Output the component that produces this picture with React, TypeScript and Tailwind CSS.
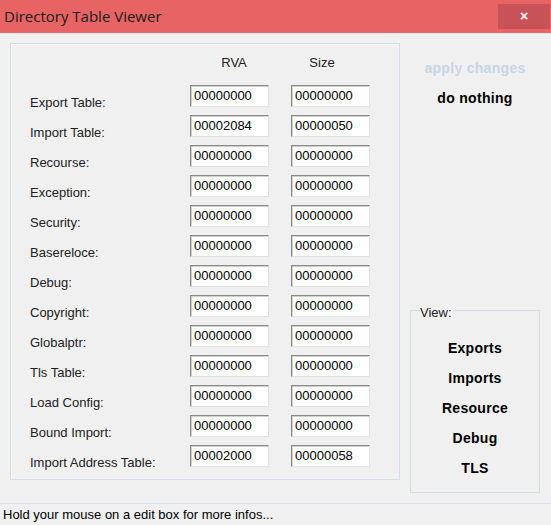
import React from 'react';

const rows: [string, string, string][] = [
  ['Export Table:', '00000000', '00000000'],
  ['Import Table:', '00002084', '00000050'],
  ['Recourse:', '00000000', '00000000'],
  ['Exception:', '00000000', '00000000'],
  ['Security:', '00000000', '00000000'],
  ['Basereloce:', '00000000', '00000000'],
  ['Debug:', '00000000', '00000000'],
  ['Copyright:', '00000000', '00000000'],
  ['Globalptr:', '00000000', '00000000'],
  ['Tls Table:', '00000000', '00000000'],
  ['Load Config:', '00000000', '00000000'],
  ['Bound Import:', '00000000', '00000000'],
  ['Import Address Table:', '00002000', '00000058'],
];

const views = ['Exports', 'Imports', 'Resource', 'Debug', 'TLS'];

function EditBox({ value }: { value: string }) {
  return (
    <div className="w-[79px] h-[22px] bg-white border-t border-l border-t-[#8a8a8a] border-l-[#8a8a8a] border-b border-r border-b-[#e3e3e3] border-r-[#e3e3e3] shadow-[inset_1px_1px_0_#d0d0d0] pl-[3px] flex items-center text-[13px] leading-4 text-black">
      {value}
    </div>
  );
}

export default function App() {
  return (
    <div
      className="w-[551px] h-[525px] bg-[#f0f0f0] flex flex-col overflow-hidden"
      style={{ fontFamily: '"Liberation Sans", Arial, sans-serif' }}
    >
      {/* title bar */}
      <div className="h-[33px] bg-[#e86464] flex items-start justify-between shrink-0">
        <div
          className="pl-[4px] pt-[6px] text-[15px] leading-5 text-[#1a1a1a]"
          style={{ fontFamily: '"Open Sans", "Noto Sans", sans-serif' }}
        >
          Directory Table Viewer
        </div>
        <div className="mt-[4px] mr-[1px] w-[52px] h-[25px] bg-[#c95258] flex items-center justify-center text-white text-[14px] font-bold">
          ×
        </div>
      </div>

      {/* body */}
      <div className="flex-1 flex pl-[10px] pt-[10px]">
        <div className="w-[390px] h-[437px] border border-[#d3ddec] shadow-[inset_1px_1px_0_#ffffff] pt-[11px] pl-[19px]">
          <div className="flex h-4 leading-4 text-[13px] text-[#222]">
            <div className="w-[166px]" />
            <div className="w-[76px] text-center">RVA</div>
            <div className="w-[10px]" />
            <div className="w-[80px] text-center">Size</div>
          </div>
          <div className="mt-[14px] flex flex-col">
            {rows.map(([label, rva, size]) => (
              <div key={label} className="flex h-[30px]">
                <div className="w-[160px] mt-[10px] text-[13px] leading-4 text-[#222]">{label}</div>
                <EditBox value={rva} />
                <div className="w-[22px]" />
                <EditBox value={size} />
              </div>
            ))}
          </div>
        </div>

        <div className="ml-[10px] w-[130px] flex flex-col items-center">
          <div className="mt-[17px] text-[14px] tracking-[0.3px] leading-4 font-bold text-[#c9d5e8]">apply changes</div>
          <div className="mt-[14px] text-[14px] tracking-[0.3px] leading-4 font-bold text-black">do nothing</div>
          <div className="relative mt-[204px] w-[130px] h-[183px] border border-[#d3ddec]">
            <span className="absolute left-[9px] top-[-6px] bg-[#f0f0f0] pr-[1px] text-[13px] leading-4 text-[#222]">View:</span>
            <div className="pt-[29px] flex flex-col items-center">
              {views.map((v) => (
                <div key={v} className="h-[30px] text-[14px] tracking-[0.3px] leading-4 font-bold text-black">
                  {v}
                </div>
              ))}
            </div>
          </div>
        </div>
      </div>

      {/* status bar */}
      <div className="h-[22px] border-t border-[#d8e1ee] shrink-0 pl-[3px] pt-[3px] text-[13px] leading-4 text-black">
        Hold your mouse on a edit box for more infos...
      </div>
    </div>
  );
}
